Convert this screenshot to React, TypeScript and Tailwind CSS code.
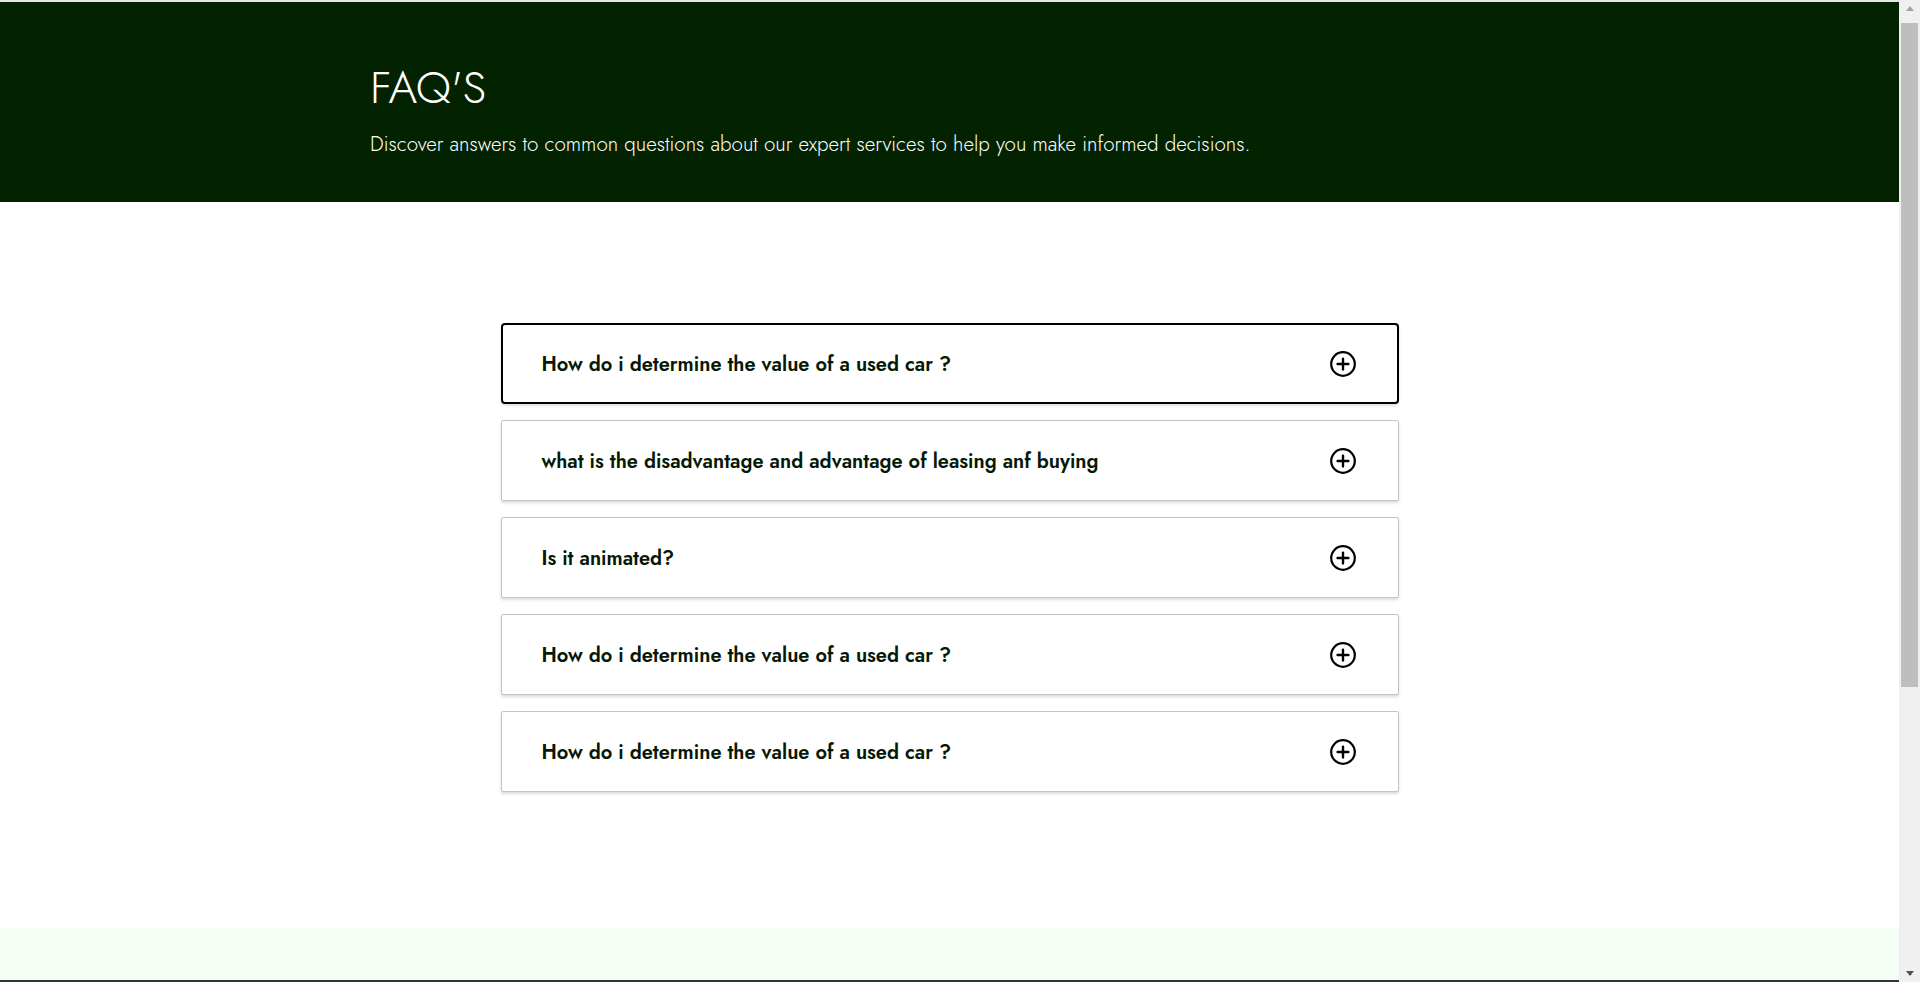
import { Fragment } from "react";

const faqs = [
  "How do i determine the value of a used car ?",
  "what is the disadvantage and advantage of leasing anf buying",
  "Is it animated?",
  "How do i determine the value of a used car ?",
  "How do i determine the value of a used car ?",
];

function PlusCircle() {
  return (
    <svg width="28" height="28" viewBox="0 0 28 28" fill="none" stroke="#000" strokeLinecap="round">
      <circle cx="14" cy="14" r="11.8" strokeWidth="2.2" />
      <path d="M14 8.6v10.8M8.6 14h10.8" strokeWidth="2.4" />
    </svg>
  );
}

function FaqItem({ question, active }: { question: string; active?: boolean }) {
  return (
    <div
      className={
        active
          ? "flex h-[81px] items-center justify-between rounded-[4px] border-2 border-black bg-white pl-[39px] pr-[40px] shadow-[0_2px_3px_rgba(0,0,0,0.12)]"
          : "flex h-[81px] items-center justify-between rounded-[2px] border border-[#c4c4c4] bg-white pl-10 pr-[41px] shadow-[0_2px_3px_rgba(0,0,0,0.14)]"
      }
    >
      <span className="block pt-[2px] text-[20px] font-semibold text-[#061806]">{question}</span>
      <PlusCircle />
    </div>
  );
}

// the page is photographed with a classic scrollbar on the right
function Scrollbar() {
  return (
    <div className="flex h-[982px] w-[21px] shrink-0 flex-col items-center bg-[#f0f0f0]">
      <div className="flex h-[17px] w-full items-center justify-center">
        <div className="h-0 w-0 border-x-[4px] border-b-[5px] border-x-transparent border-b-[#a3a3a3]" />
      </div>
      <div className="mt-[6px] h-[664px] w-[17px] bg-[#bebebe]" />
      <div className="flex-1" />
      <div className="flex h-[17px] w-full items-center justify-center">
        <div className="h-0 w-0 border-x-[4px] border-t-[5px] border-x-transparent border-t-[#505050]" />
      </div>
    </div>
  );
}

export default function App() {
  return (
    <div className="flex h-[982px] overflow-hidden bg-white font-['Jost','Lato',sans-serif]">
      <div className="min-w-0 flex-1">
        <header className="border-t-2 border-[#e6e6e6] bg-[#032200]">
          <div className="mx-auto flex h-[200px] max-w-[1159px] flex-col pt-[63px]">
            <h1 className="text-[45px] font-light leading-none text-white">FAQ'S</h1>
            <p className="mt-[19px] text-[20.6px] font-light text-white">
              Discover answers to common questions about our expert services to help you make informed decisions.
            </p>
          </div>
        </header>

        <section className="flex justify-center pb-[136px] pt-[121px]">
          <div className="flex w-[898px] flex-col gap-4">
            {faqs.map((q, i) => (
              <Fragment key={i}>
                <FaqItem question={q} active={i === 0} />
              </Fragment>
            ))}
          </div>
        </section>

        <section className="h-[52px] bg-[#f5fff5]" />
        <footer className="h-[424px] bg-[#333333]" />
      </div>
      <Scrollbar />
    </div>
  );
}
